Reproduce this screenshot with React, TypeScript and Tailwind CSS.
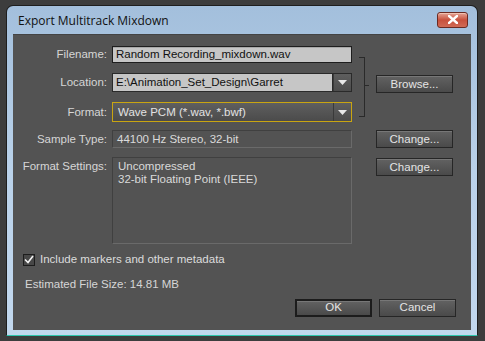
import React from "react";

const FONT = { fontFamily: '"Liberation Sans", Arial, sans-serif' };

function Button({ label, primary = false }: { label: string; primary?: boolean }) {
  return (
    <div
      className={`w-[77px] h-[18px] flex items-center justify-center text-[11.5px] text-[#e4e4e4] bg-gradient-to-b from-[#626262] to-[#4a4a4a] shadow-[inset_0_1px_0_#777] ${
        primary ? "border-2 border-[#1c1c1c]" : "border border-[#262626]"
      }`}
    >
      {label}
    </div>
  );
}

function Arrow() {
  return (
    <div className="w-[18px] h-full flex items-center justify-center border-l border-[#3a3a3a]">
      <svg width="9" height="5" viewBox="0 0 9 5">
        <path d="M0 0 L9 0 L4.5 5 Z" fill="#e8e8e8" />
      </svg>
    </div>
  );
}

function Label({ text }: { text: string }) {
  return <div className="w-[94px] shrink-0 text-right text-[11.5px] text-[#d6d6d6]">{text}</div>;
}

export default function App() {
  return (
    <div className="w-[485px] h-[341px] bg-[#3d3d3d] pt-[5px] pl-[6px] overflow-hidden" style={FONT}>
      {/* window */}
      <div className="w-[472px] h-[331px] rounded-t-[7px] border border-[#1e1e1e] border-b-[#2fc6ae] bg-gradient-to-b from-[#a3bfdc] via-[#bad2ea] to-[#c2d8ee] flex flex-col">
        {/* title bar */}
        <div className="h-[28px] shrink-0 flex items-center pl-[11px] pr-[9px]">
          <span className="text-[12px] text-[#111] mt-[2px]" style={{ fontFamily: '"Open Sans", "Liberation Sans", sans-serif' }}>
            Export Multitrack Mixdown
          </span>
          <div className="ml-auto mt-[-1px] w-[31px] h-[16px] rounded-[3px] border border-[#6b2a22] bg-gradient-to-b from-[#e3a395] via-[#c8503c] to-[#d06a55] flex items-center justify-center shadow-[inset_0_1px_0_#f0c0b0]">
            <svg width="10" height="9" viewBox="0 0 10 9">
              <path d="M1 1 L9 8 M9 1 L1 8" stroke="#fff" strokeWidth="2.4" strokeLinecap="square" />
            </svg>
          </div>
        </div>

        {/* content */}
        <div className="mx-[6px] mb-[5px] flex-1 bg-[#535353] border-t border-[#444] flex flex-col">
          {/* first group with bracket */}
          <div className="flex items-center mt-[11px]">
            <div className="flex flex-col gap-[10px]">
              <div className="flex items-center gap-[5px]">
                <Label text="Filename:" />
                <div className="w-[240px] h-[17px] bg-[#c6c6c6] border border-[#1e1e1e] shadow-[inset_0_1px_0_#a8a8a8] text-[11.5px] text-[#111] pl-[3px] flex items-center">
                  Random Recording_mixdown.wav
                </div>
              </div>
              <div className="flex items-center gap-[5px]">
                <Label text="Location:" />
                <div className="w-[240px] h-[19px] flex items-center border border-[#2a2a2a] bg-gradient-to-b from-[#5e5e5e] to-[#4d4d4d] text-[11.5px] text-[#e2e2e2]">
                  <div className="flex-1 pl-[3px] h-full flex items-center bg-[#c6c6c6] text-[#111] border-r border-[#2a2a2a]">
                    E:\Animation_Set_Design\Garret
                  </div>
                  <Arrow />
                </div>
              </div>
              <div className="flex items-center gap-[5px]">
                <Label text="Format:" />
                <div className="w-[240px] h-[20px] flex items-center border border-[#c9a511] bg-gradient-to-b from-[#5f5f5f] to-[#4b4b4b] text-[11.5px] text-[#e2e2e2]">
                  <div className="flex-1 pl-[5px]">Wave PCM (*.wav, *.bwf)</div>
                  <Arrow />
                </div>
              </div>
            </div>
            <div className="ml-[7px] mt-[5px] w-[6px] h-[60px] border-t border-r border-b border-[#2a2a2a]" />
            <div className="mt-[2px] w-[4px] h-px bg-[#2a2a2a]" />
            <div className="ml-[7px]">
              <Button label="Browse..." />
            </div>
          </div>

          {/* sample type */}
          <div className="flex items-center mt-[8px]">
            <div className="flex items-center gap-[5px]">
              <Label text="Sample Type:" />
              <div className="w-[240px] h-[18px] border border-[#404040] border-b-[#6a6a6a] border-r-[#6a6a6a] text-[11.5px] text-[#dadada] pl-[4px] flex items-center">
                44100 Hz Stereo, 32-bit
              </div>
            </div>
            <div className="ml-[24px]">
              <Button label="Change..." />
            </div>
          </div>

          {/* format settings */}
          <div className="flex items-start mt-[9px]">
            <div className="flex items-start gap-[5px]">
              <div className="w-[94px] shrink-0 text-right text-[11.5px] text-[#d6d6d6] mt-[1px]">Format Settings:</div>
              <div className="w-[240px] h-[87px] border border-[#404040] border-b-[#6a6a6a] border-r-[#6a6a6a] text-[11.5px] text-[#dadada] pl-[5px] pt-[2px] leading-[13px]">
                <div>Uncompressed</div>
                <div>32-bit Floating Point (IEEE)</div>
              </div>
            </div>
            <div className="ml-[24px] mt-[1px]">
              <Button label="Change..." />
            </div>
          </div>

          {/* checkbox */}
          <div className="flex items-center gap-[5px] ml-[10px] mt-[7px] text-[11.5px] text-[#dcdcdc]">
            <div className="w-[12px] h-[12px] border border-[#1c1c1c] bg-[#474747] flex items-center justify-center">
              <svg width="10" height="9" viewBox="0 0 10 9">
                <path d="M1 4.5 L4 7.5 L9 1" stroke="#f2f2f2" strokeWidth="1.6" fill="none" />
              </svg>
            </div>
            <span>Include markers and other metadata</span>
          </div>

          <div className="ml-[12px] mt-[7px] text-[11.5px] text-[#d6d6d6]">Estimated File Size: 14.81 MB</div>

          {/* bottom buttons */}
          <div className="flex justify-end gap-[7px] mt-[6px] pr-[15px]">
            <Button label="OK" primary />
            <Button label="Cancel" />
          </div>
        </div>
      </div>
    </div>
  );
}
